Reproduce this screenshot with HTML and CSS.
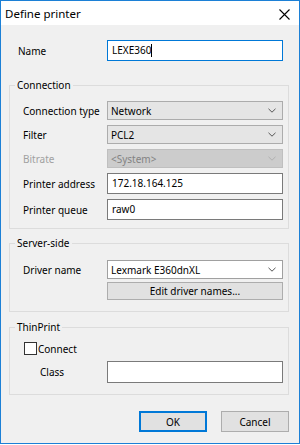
FILE: index.html
```html
<!DOCTYPE html>
<html lang="en">
<head>
    <meta charset="UTF-8">
    <meta name="viewport" content="width=device-width, initial-scale=1.0">
    <title>Define printer</title>
    <link rel="stylesheet" href="styles.css">
</head>
<body>
    <div class="window">
        <div class="titlebar">
            <span class="title">Define printer</span>
            <svg class="close" width="11" height="11" viewBox="0 0 11 11">
                <path d="M0.5 0.5 L10.5 10.5 M10.5 0.5 L0.5 10.5" stroke="#000" stroke-width="1.1" fill="none"/>
            </svg>
        </div>

        <div class="content">
            <!-- Name -->
            <div class="row name-row">
                <label>Name</label>
                <div class="textbox focused">LEXE360<span class="caret"></span></div>
            </div>

            <!-- Connection -->
            <fieldset class="group group-connection">
                <legend>Connection</legend>
                <div class="rows">
                    <div class="row">
                        <label>Connection type</label>
                        <div class="combo">
                            <span>Network</span>
                            <svg class="chevron" width="8" height="5" viewBox="0 0 8 5"><path d="M0.5 0.8 L4 4.2 L7.5 0.8" /></svg>
                        </div>
                    </div>
                    <div class="row">
                        <label>Filter</label>
                        <div class="combo">
                            <span>PCL2</span>
                            <svg class="chevron" width="8" height="5" viewBox="0 0 8 5"><path d="M0.5 0.8 L4 4.2 L7.5 0.8" /></svg>
                        </div>
                    </div>
                    <div class="row">
                        <label class="disabled">Bitrate</label>
                        <div class="combo disabled">
                            <span>&lt;System&gt;</span>
                            <svg class="chevron" width="8" height="5" viewBox="0 0 8 5"><path d="M0.5 0.8 L4 4.2 L7.5 0.8" /></svg>
                        </div>
                    </div>
                    <div class="row">
                        <label>Printer address</label>
                        <div class="textbox">172.18.164.125</div>
                    </div>
                    <div class="row">
                        <label>Printer queue</label>
                        <div class="textbox">raw0</div>
                    </div>
                </div>
            </fieldset>

            <!-- Server-side -->
            <fieldset class="group group-server">
                <legend>Server-side</legend>
                <div class="row">
                    <label>Driver name</label>
                    <div class="combo editable">
                        <span>Lexmark E360dnXL</span>
                        <svg class="chevron" width="8" height="5" viewBox="0 0 8 5"><path d="M0.5 0.8 L4 4.2 L7.5 0.8" /></svg>
                    </div>
                </div>
                <div class="row">
                    <span></span>
                    <button class="small-button">Edit driver names...</button>
                </div>
            </fieldset>

            <!-- ThinPrint -->
            <fieldset class="group group-thinprint">
                <legend>ThinPrint</legend>
                <div class="check-row">
                    <span class="checkbox"></span>
                    <span>Connect</span>
                </div>
                <div class="row class-row">
                    <label>Class</label>
                    <div class="textbox"></div>
                </div>
            </fieldset>

            <div class="buttons">
                <button class="dialog-button default">OK</button>
                <button class="dialog-button">Cancel</button>
            </div>
        </div>
    </div>
</body>
</html>
```

FILE: styles.css
```css
* {
    box-sizing: border-box;
}
body {
    margin: 0;
    font-family: "Noto Sans", "Open Sans", sans-serif;
    font-size: 10px;
    color: #000;
    background-color: #fff;
}
.window {
    width: 300px;
    height: 444px;
    border: 1px solid #1c80d6;
    background-color: #f0f0f0;
}
.titlebar {
    height: 24px;
    background-color: #fff;
    display: flex;
    align-items: center;
    justify-content: space-between;
    padding: 0 9px 0 4px;
}
.title {
    font-size: 11.5px;
}
.close {
    display: block;
    margin-top: 2px;
}
.content {
    padding: 15px 10px 0 8px;
}
.row {
    display: grid;
    grid-template-columns: 84px 176px;
    align-items: center;
    white-space: nowrap;
}
.name-row {
    padding-left: 9px;
    grid-template-columns: 89px 176px;
}
label.disabled {
    color: #a0a0a0;
}
.textbox {
    height: 21px;
    border: 1px solid #7a7a7a;
    background-color: #fff;
    padding: 0 4px;
    line-height: 19px;
    white-space: nowrap;
}
.textbox.focused {
    border-color: #0078d7;
}
.caret {
    display: inline-block;
    width: 1px;
    height: 13px;
    background-color: #000;
    vertical-align: -3px;
}
.combo {
    height: 19px;
    border: 1px solid #acacac;
    background-color: #e5e5e5;
    padding: 0 6px 0 3px;
    display: flex;
    align-items: center;
    justify-content: space-between;
}
.combo.disabled {
    background-color: #cccccc;
    border-color: #bfbfbf;
    color: #838383;
}
.combo.editable {
    background-color: #fff;
    border-color: #a0a0a0;
}
.chevron path {
    fill: none;
    stroke: #555;
    stroke-width: 1;
}
.combo.disabled .chevron path {
    stroke: #b0b0b0;
}
.group {
    margin: 0;
    border: 1px solid #dcdcdc;
    padding: 9px 5px 8px 13px;
}
.group legend {
    padding: 0 2px;
    margin-left: -8px;
    line-height: 14px;
}
.group-connection {
    margin-top: 17px;
}
.rows {
    display: flex;
    flex-direction: column;
    gap: 5px;
}
.group-server {
    margin-top: 7px;
    padding-top: 10px;
    padding-bottom: 11px;
}
.group-server .row + .row {
    margin-top: 3px;
}
.small-button {
    height: 18px;
    border: 1px solid #adadad;
    background-color: #e1e1e1;
    font-family: inherit;
    font-size: 10px;
    padding: 0;
    color: #000;
}
.group-thinprint {
    margin-top: 8px;
    padding-top: 7px;
    padding-bottom: 11px;
}
.check-row {
    height: 15px;
    display: flex;
    align-items: center;
    gap: 1px;
    padding-left: 1px;
}
.checkbox {
    width: 13px;
    height: 13px;
    border: 1px solid #333;
    background-color: #fff;
}
.class-row {
    margin-top: 5px;
}
.class-row label {
    padding-left: 17px;
}
.class-row .textbox {
    height: 22px;
}
.buttons {
    margin-top: 16px;
    display: flex;
    justify-content: flex-end;
    gap: 14px;
}
.dialog-button {
    width: 68px;
    height: 21px;
    border: 1px solid #adadad;
    background-color: #e1e1e1;
    font-family: inherit;
    font-size: 10px;
    color: #000;
    padding: 0;
}
.dialog-button.default {
    border: 2px solid #0078d7;
}
```
